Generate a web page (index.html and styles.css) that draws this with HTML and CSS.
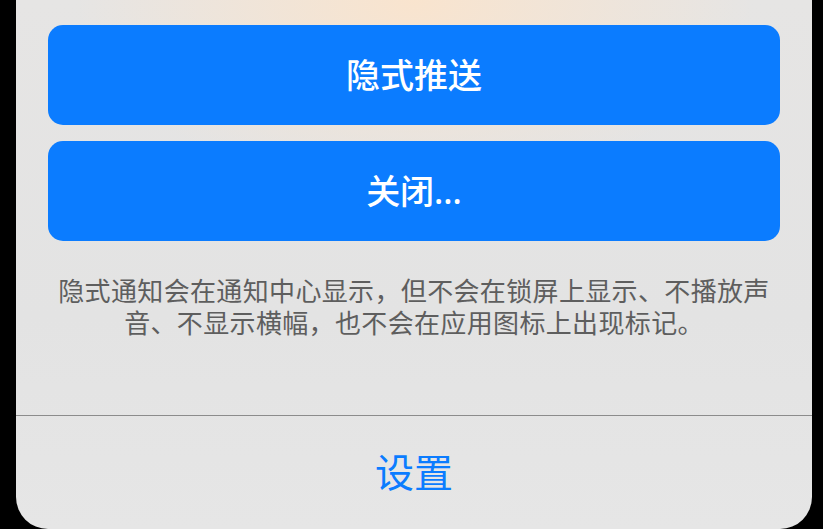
FILE: index.html
```html
<!DOCTYPE html>
<html lang="zh-CN">
<head>
    <meta charset="UTF-8">
    <meta name="viewport" content="width=device-width, initial-scale=1.0">
    <title>通知设置</title>
    <link rel="stylesheet" href="styles.css">
</head>
<body>
    <div class="sheet">
        <div class="actions">
            <button class="action-btn" type="button">隐式推送</button>
            <button class="action-btn" type="button">关闭...</button>
            <p class="hint">隐式通知会在通知中心显示，但不会在锁屏上显示、不播放声音、不显示横幅，也不会在应用图标上出现标记。</p>
        </div>
        <div class="footer">
            <button class="link-btn" type="button">设置</button>
        </div>
    </div>
</body>
</html>
```

FILE: styles.css
```css
body {
    margin: 0;
    padding: 0;
    background-color: #000;
    font-family: "Noto Sans", "Noto Sans CJK SC", sans-serif;
    overflow: hidden;
}

.sheet {
    width: 796px;
    height: 529px;
    margin-left: 16px;
    display: flex;
    flex-direction: column;
    background:
        radial-gradient(ellipse 340px 190px at 50% 0, rgba(250, 228, 205, 0.95), rgba(240, 228, 215, 0) 100%),
        linear-gradient(#e6e5e4, #e3e3e3 60%, #e6e6e6);
    border-radius: 0 0 32px 32px;
    overflow: hidden;
}

.actions {
    padding: 25px 32px 0;
    display: flex;
    flex-direction: column;
    gap: 16px;
    height: 390px;
}

.action-btn {
    height: 100px;
    border: none;
    border-radius: 15px;
    background-color: #0b7cff;
    color: #fff;
    font-family: "Noto Sans", "Noto Sans CJK SC", sans-serif;
    font-size: 34px;
    font-weight: 500;
    padding: 0 0 3px;
    cursor: pointer;
}

.hint {
    margin: 18px 4px 0;
    text-align: center;
    color: #5e5e5e;
    font-size: 26px;
    letter-spacing: 0.35px;
    line-height: 32px;
}

.footer {
    border-top: 1px solid #8c8c8c;
    flex: 1;
    display: flex;
    align-items: center;
    justify-content: center;
    padding-bottom: 6px;
}

.link-btn {
    border: none;
    background: none;
    color: #0b7cff;
    font-family: "Noto Sans", "Noto Sans CJK SC", sans-serif;
    font-size: 39px;
    padding: 0;
    cursor: pointer;
}
```
